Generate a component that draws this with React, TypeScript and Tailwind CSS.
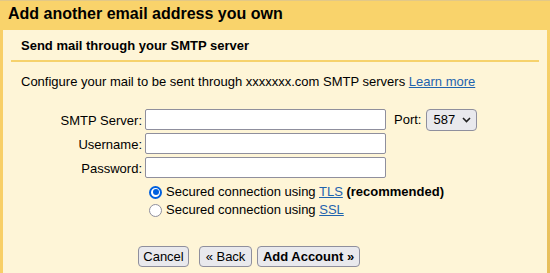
import React from "react";

const font = { fontFamily: '"Liberation Sans", Arial, sans-serif' };

function Radio({ checked }: { checked: boolean }) {
  return checked ? (
    <span className="w-[13px] h-[13px] rounded-full border-[2px] border-[#0060df] bg-white flex items-center justify-center shrink-0">
      <span className="w-[6px] h-[6px] rounded-full bg-[#0060df]" />
    </span>
  ) : (
    <span className="w-[13px] h-[13px] rounded-full border border-[#8f8f9d] bg-white shrink-0" />
  );
}

function Input() {
  return <div className="w-[241px] h-[21px] bg-white border border-[#8f8f9d] rounded-[2px]" />;
}

export default function App() {
  return (
    <div
      className="w-[550px] h-[273px] overflow-hidden flex flex-col bg-[#f9d36b] border-t border-[#e2c888] text-[13px] text-black"
      style={font}
    >
      <div className="h-[29px] shrink-0 pl-[8px] pt-[3px] text-[16px] font-bold leading-[20px]">
        Add another email address you own
      </div>
      <div className="flex-1 flex">
        <div className="w-[3px] bg-[#f8cf66]" />
        <div className="flex-1 bg-[#fef5d7] flex flex-col">
          <div className="pl-[18px] pt-[8px] font-bold text-[13px] leading-[16px]">
            Send mail through your SMTP server
          </div>
          <div className="mx-[8px] mt-[6px] h-[2px] bg-[#f6d26c]" />
          <div className="pl-[18px] mt-[12px] leading-[16px]">
            Configure your mail to be sent through xxxxxxx.com SMTP servers{" "}
            <span className="text-[#1f63ae] underline">Learn more</span>
          </div>
          <div className="mt-[19px] flex flex-col gap-[3px]">
            <div className="flex items-center h-[21px]">
              <div className="w-[139px] text-right leading-[16px] pt-[2px]">SMTP Server:</div>
              <div className="ml-[3px]"><Input /></div>
              <div className="ml-[8px] leading-[16px] pt-[1px]">Port:</div>
              <div className="ml-[5px] w-[51px] h-[22px] bg-[#e9e9ed] border border-[#8f8f9d] rounded-[4px] flex items-center pl-[6px] gap-[7px]">
                <span className="leading-[16px]">587</span>
                <svg width="9" height="6" viewBox="0 0 9 6">
                  <path d="M1 1 L4.5 4.5 L8 1" fill="none" stroke="#222" strokeWidth="1.6" />
                </svg>
              </div>
            </div>
            <div className="flex items-center h-[21px]">
              <div className="w-[139px] text-right leading-[16px] pt-[2px]">Username:</div>
              <div className="ml-[3px]"><Input /></div>
            </div>
            <div className="flex items-center h-[21px]">
              <div className="w-[139px] text-right leading-[16px] pt-[2px]">Password:</div>
              <div className="ml-[3px]"><Input /></div>
            </div>
          </div>
          <div className="mt-[5px] ml-[146px] flex flex-col">
            <div className="flex items-center h-[18px] gap-[4px]">
              <Radio checked />
              <span className="leading-[16px]">
                Secured connection using <span className="text-[#1f63ae] underline">TLS</span>{" "}
                <b>(recommended)</b>
              </span>
            </div>
            <div className="flex items-center h-[18px] gap-[4px]">
              <Radio checked={false} />
              <span className="leading-[16px]">
                Secured connection using <span className="text-[#1f63ae] underline">SSL</span>
              </span>
            </div>
          </div>
          <div className="mt-[27px] ml-[135px] flex items-center">
            <div className="w-[51px] h-[21px] bg-[#e9e9ed] border border-[#8f8f9d] rounded-[4px] flex items-center justify-center leading-[16px]">
              Cancel
            </div>
            <div className="ml-[10px] w-[53px] h-[21px] bg-[#e9e9ed] border border-[#8f8f9d] rounded-[4px] flex items-center justify-center leading-[16px]">
              « Back
            </div>
            <div className="ml-[5px] w-[103px] h-[21px] bg-[#e9e9ed] border border-[#8f8f9d] rounded-[4px] flex items-center justify-center leading-[16px] font-bold">
              Add Account »
            </div>
          </div>
        </div>
        <div className="w-[3px] bg-gradient-to-b from-[#f9d36b] to-[#e6be5c]" />
      </div>
    </div>
  );
}
